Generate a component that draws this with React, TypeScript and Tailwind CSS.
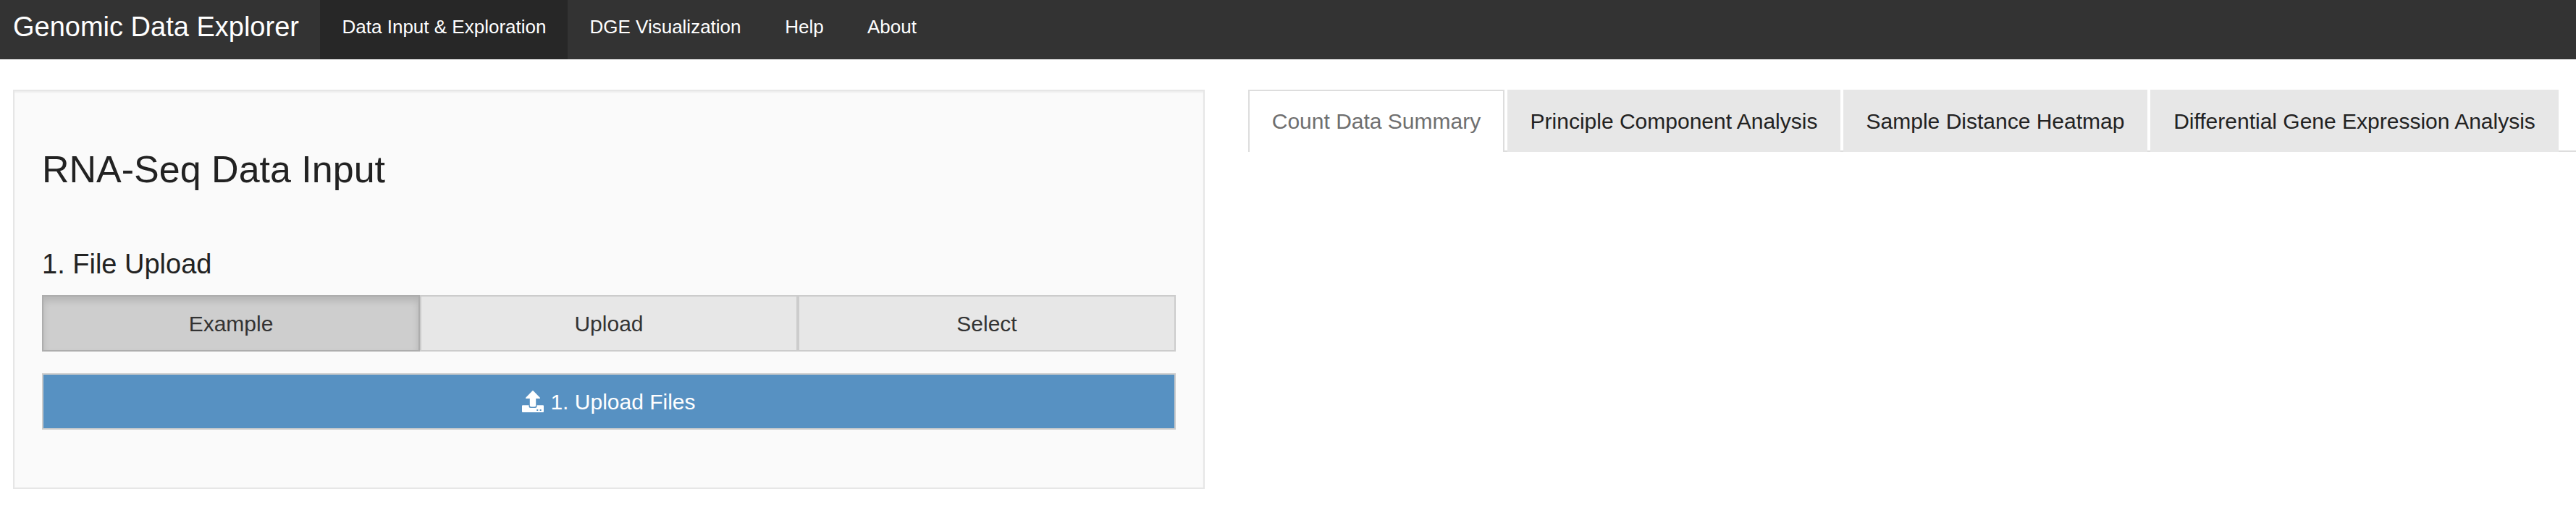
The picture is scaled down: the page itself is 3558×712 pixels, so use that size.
const NAV = [
  { label: "Data Input & Exploration", width: "w-[342px] pl-px", active: true },
  { label: "DGE Visualization", width: "w-[270px]" },
  { label: "Help", width: "w-[114px]" },
  { label: "About", width: "w-[128px]" },
];

const TABS = [
  { label: "Principle Component Analysis", width: "w-[460px]" },
  { label: "Sample Distance Heatmap", width: "w-[420px]" },
  { label: "Differential Gene Expression Analysis", width: "w-[564px]" },
];

function UploadIcon() {
  return (
    <svg viewBox="0 0 30 30" className="mt-[22px] h-[30px] w-[30px] shrink-0" fill="currentColor">
      <path d="M14.2.4Q15 -.2 15.800.4L24.800 9.700Q25.400 11 24.200 11H19.200V20.500Q19.200 22.500 17.200 22.500H12.800Q10.800 22.500 10.800 20.500V11H5.800Q4.600 11 5.200 9.700Z" />
      <path
        fillRule="evenodd"
        d="M1 20.300H9.500V21.500Q9.500 24 12 24H18Q20.500 24 20.500 21.500V20.300H29Q30 20.300 30 21.300V29Q30 30 29 30H1Q0 30 0 29V21.300Q0 20.300 1 20.300ZM20.300 26V28H22.300V26ZM24.600 26V28H26.600V26Z"
      />
    </svg>
  );
}

export default function App() {
  return (
    <div className="min-h-[712px] w-full overflow-hidden bg-white font-['Liberation_Sans',Arial,sans-serif] text-[#222]">
      <nav className="flex h-[82px] bg-[#333] text-white">
        <div className="w-[442px] pl-[18px] pt-[15px] text-[38px] leading-[44px] whitespace-nowrap">Genomic Data Explorer</div>
        {NAV.map((n) => (
          <a
            key={n.label}
            className={`${n.width} ${n.active ? "bg-[#272727]" : ""} flex h-[82px] justify-center pt-[22px] text-[26px] leading-[30px] whitespace-nowrap`}
          >
            {n.label}
          </a>
        ))}
      </nav>
      <main className="flex items-start pt-[42px] pl-[18px]">
        <section className="h-[552px] w-[1646px] shrink-0 border-2 border-[#e6e6e6] bg-[#fafafa] px-[38px] shadow-[inset_0_2px_2px_rgba(0,0,0,0.05)]">
          <h2 className="mt-[77px] text-[52px] leading-[62px]">RNA-Seq Data Input</h2>
          <h4 className="mt-[78px] text-[38px] leading-[44px]">1. File Upload</h4>
          <div className="mt-[21px] flex text-center text-[30px] leading-[72px] text-[#333]">
            <button className="h-[78px] w-[522px] border-2 border-[#adadad] bg-[#cecece] pt-[2px] shadow-[inset_0_6px_10px_rgba(0,0,0,0.125)]">Example</button>
            <button className="h-[78px] w-[522px] border-2 border-[#ccc] bg-[#e7e7e7] pt-[2px]">Upload</button>
            <button className="h-[78px] w-[522px] border-2 border-[#ccc] bg-[#e7e7e7] pt-[2px]">Select</button>
          </div>
          <button className="mt-[30px] flex h-[78px] w-full justify-center border-2 border-[#ccc] bg-[#5791c2] text-[30px] leading-[76px] text-white">
            <UploadIcon />
            <span className="pl-[9px]">1. Upload Files</span>
          </button>
        </section>
        <div className="ml-[60px] flex h-[86px] flex-1 gap-[4px] border-b-2 border-[#ddd] text-center text-[30px] leading-[84px] whitespace-nowrap">
          <a className="h-[86px] w-[354px] shrink-0 border-2 border-b-0 border-[#ddd] bg-white text-[#6f6f6f]">Count Data Summary</a>
          {TABS.map((t) => (
            <a key={t.label} className={`${t.width} h-[86px] shrink-0 border-t-2 border-[#e7e7e7] bg-[#e7e7e7]`}>
              {t.label}
            </a>
          ))}
        </div>
      </main>
    </div>
  );
}
